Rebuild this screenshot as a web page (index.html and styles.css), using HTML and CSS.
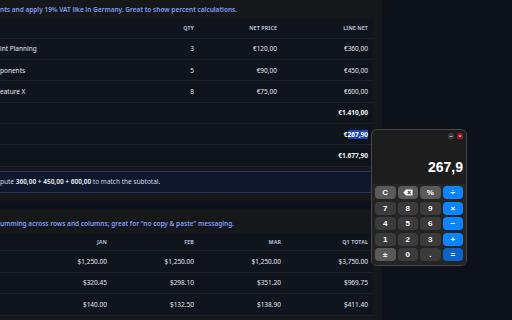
FILE: index.html
```html
<!DOCTYPE html>
<html lang="en">
<head>
  <meta charset="UTF-8" />
  <meta name="viewport" content="width=device-width, initial-scale=1.0" />
  <title>Calculator demo tables</title>
  <link rel="stylesheet" href="styles.css">
</head>
<body>
  <main class="main">
    <section class="card">
      <p class="desc">nts and apply 19% VAT like in Germany. Great to show percent calculations.</p>
      <table class="grid vat">
        <thead>
          <tr><th></th><th class="c-qty">Qty</th><th class="c-price">Net price</th><th class="c-line">Line net</th></tr>
        </thead>
        <tbody>
          <tr><td>int Planning</td><td>3</td><td>€120,00</td><td>€360,00</td></tr>
          <tr><td>ponents</td><td>5</td><td>€90,00</td><td>€450,00</td></tr>
          <tr><td>eature X</td><td>8</td><td>€75,00</td><td>€600,00</td></tr>
          <tr class="total"><td></td><td></td><td></td><td>€1.410,00</td></tr>
          <tr class="total"><td></td><td></td><td></td><td>€<span class="sel">267,90</span></td></tr>
          <tr class="total"><td></td><td></td><td></td><td>€1.677,90</td></tr>
        </tbody>
      </table>
      <div class="note">pute <b>360,00 + 450,00 + 600,00</b> to match the subtotal.</div>
    </section>

    <section class="card">
      <p class="desc">umming across rows and columns; great for “no copy &amp; paste” messaging.</p>
      <table class="grid quarter">
        <thead>
          <tr><th></th><th>Jan</th><th>Feb</th><th>Mar</th><th>Q1 total</th></tr>
        </thead>
        <tbody>
          <tr><td></td><td>$1,250.00</td><td>$1,250.00</td><td>$1,250.00</td><td>$3,750.00</td></tr>
          <tr><td></td><td>$320.45</td><td>$298.10</td><td>$351.20</td><td>$969.75</td></tr>
          <tr><td></td><td>$140.00</td><td>$132.50</td><td>$138.90</td><td>$411.40</td></tr>
        </tbody>
      </table>
    </section>
  </main>

  <aside class="calc">
    <div class="calc-bar">
      <span class="win-btn min">–</span>
      <span class="win-btn close">×</span>
    </div>
    <div class="calc-display">267,9</div>
    <div class="keys">
      <button class="key fn">C</button>
      <button class="key fn">
        <svg width="10" height="7" viewBox="0 0 10 7"><path d="M3 0.5H9.5V6.5H3L0.4 3.5Z" fill="#fff"/><path d="M4.8 2L7.6 5M7.6 2L4.8 5" stroke="#5a5a5a" stroke-width="1.1"/></svg>
      </button>
      <button class="key fn">%</button>
      <button class="key op">÷</button>
      <button class="key">7</button>
      <button class="key">8</button>
      <button class="key">9</button>
      <button class="key op">×</button>
      <button class="key">4</button>
      <button class="key">5</button>
      <button class="key">6</button>
      <button class="key op">−</button>
      <button class="key">1</button>
      <button class="key">2</button>
      <button class="key">3</button>
      <button class="key op">+</button>
      <button class="key fn">±</button>
      <button class="key">0</button>
      <button class="key">.</button>
      <button class="key eq">=</button>
    </div>
  </aside>
</body>
</html>
```

FILE: styles.css
```css
* { margin: 0; padding: 0; box-sizing: border-box; }
html, body { height: 100%; overflow: hidden; }
body { font-family: 'Noto Sans', 'Open Sans', sans-serif; font-size: 6.5px; background: #0d1119; color: #e6e9f0; position: relative; }

.main { width: 382px; margin-top: -5px; display: flex; flex-direction: column; gap: 8px; }
.card { background: #16171b; padding: 10px 9px 8px 0; }
.card + .card { padding-bottom: 20px; }
.desc { color: #7f9ef2; font-weight: 600; line-height: 10px; margin-bottom: 4px; white-space: nowrap; overflow: hidden; }

.grid { width: 373px; border-collapse: collapse; background: #10141c; }
.grid th, .grid td { text-align: right; padding: 0 5px; border-bottom: 1px solid #1b202b; white-space: nowrap; }
.grid th { height: 19px; font-size: 5.3px; font-weight: 700; text-transform: uppercase; color: #b3bed3; letter-spacing: 0.1px; }
.grid td { height: 21.4px; }
.grid td:first-child, .grid th:first-child { text-align: left; padding-left: 0; }
.vat .c-qty { width: 60px; }
.vat .c-price { width: 83px; }
.vat .c-line { width: 91px; }
.vat .total td { font-weight: 700; color: #f3f4f8; }
.quarter th { height: 18px; }
.quarter th:first-child { width: 25px; }
.quarter th + th { width: 87px; }
.sel { background: #1d3fc4; color: #fff; }

.note { margin-top: 4px; height: 22px; line-height: 20px; background: #0f172c; border-top: 1px solid #24365c; border-bottom: 1px solid #24365c; color: #d3d8e4; }
.note b { color: #f3f5fa; font-weight: 600; }

.calc { position: absolute; left: 371px; top: 129px; width: 96px; height: 137px; background: #1d1d1e; border: 1px solid #45464a; border-radius: 6px; display: flex; flex-direction: column; overflow: hidden; }
.calc-bar { display: flex; justify-content: flex-end; gap: 3px; padding: 3px 3px 0 0; height: 12px; }
.win-btn { width: 6px; height: 6px; border-radius: 2px; font-size: 6px; line-height: 6px; text-align: center; font-weight: 700; }
.win-btn.min { background: #3b3b3d; color: #e5e5e5; }
.win-btn.close { background: #9a1b1f; color: #f4b9b9; }
.calc-display { height: 43px; text-align: right; padding: 18px 3px 0 0; font-family: 'Liberation Sans', Arial, sans-serif; font-size: 14px; font-weight: 700; color: #fff; line-height: 14px; }
.keys { flex: 1; background: #242425; display: grid; grid-template-columns: repeat(4, 1fr); grid-auto-rows: 13px; column-gap: 2px; row-gap: 2.5px; padding: 2px 3px 4px; }
.key { border: none; border-radius: 4px; background: #3b3b3c; color: #fff; font-family: 'Liberation Sans', Arial, sans-serif; font-size: 8px; font-weight: 700; display: flex; align-items: center; justify-content: center; }
.key.fn { background: #5a5a5b; }
.key.op { background: #0a84ff; }
.key.eq { background: #0a64c8; }
```
